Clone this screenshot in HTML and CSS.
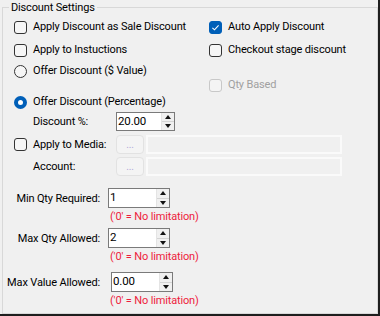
FILE: index.html
```html
<!DOCTYPE html>
<html>
<head>
<meta charset="utf-8">
<link rel="stylesheet" href="styles.css">
</head>
<body>
<div class="window">
  <div class="group">
    <div class="legend">Discount Settings</div>
    <div class="top">
      <div class="col left">
        <div class="opt"><span class="cb"></span><span>Apply Discount as Sale Discount</span></div>
        <div class="opt r2"><span class="cb"></span><span>Apply to Instuctions</span></div>
        <div class="opt r3"><span class="rb"></span><span>Offer Discount ($ Value)</span></div>
        <div class="opt r4"><span class="rb on"></span><span>Offer Discount (Percentage)</span></div>
      </div>
      <div class="col right">
        <div class="opt"><span class="cb on"><svg viewBox="0 0 13 13" width="13" height="13"><path d="M3.4 6.8 L5.5 8.8 L9.6 4.4" fill="none" stroke="#fff" stroke-width="1.1"/></svg></span><span>Auto Apply Discount</span></div>
        <div class="opt r2"><span class="cb"></span><span>Checkout stage discount</span></div>
        <div class="opt qty disabled"><span class="cb"></span><span>Qty Based</span></div>
      </div>
    </div>
    <div class="pct">
      <span class="lbl">Discount %:</span>
      <div class="spin s19"><span class="val">20.00</span><span class="btns"><span class="up"></span><span class="dn"></span></span></div>
    </div>
    <div class="media">
      <div class="opt mlabel"><span class="cb"></span><span>Apply to Media:</span></div>
      <span class="dots">...</span>
      <span class="tbox"></span>
    </div>
    <div class="media acc">
      <span class="alabel">Account:</span>
      <span class="dots">...</span>
      <span class="tbox"></span>
    </div>
    <div class="limits">
      <div class="lrow"><span class="llbl">Min Qty Required:</span><div class="spin"><span class="val">1</span><span class="btns"><span class="up"></span><span class="dn"></span></span></div></div>
      <div class="note">('0' = No limitation)</div>
      <div class="lrow second"><span class="llbl">Max Qty Allowed:</span><div class="spin"><span class="val">2</span><span class="btns"><span class="up"></span><span class="dn"></span></span></div></div>
      <div class="note">('0' = No limitation)</div>
      <div class="lrow third"><span class="llbl">Max Value Allowed:</span><div class="spin shift"><span class="val">0.00</span><span class="btns"><span class="up"></span><span class="dn"></span></span></div></div>
      <div class="note">('0' = No limitation)</div>
    </div>
  </div>
</div>
</body>
</html>
```
FILE: styles.css
```css
html, body { margin: 0; padding: 0; }
body {
  font-family: Roboto, "Liberation Sans", sans-serif;
  font-size: 11px;
  letter-spacing: -0.15px;
  color: #000;
  background: #f0f0f0;
  white-space: nowrap;
}
.window {
  width: 376px;
  height: 307px;
  border-right: 2px solid #1e1e1e;
  border-bottom: 2px solid #1e1e1e;
  background: #f0f0f0;
  padding: 7px 0 0 2px;
}
.group {
  position: relative;
  width: 374px;
  height: 305px;
  border: 1px solid #d8d8d8;
}
.legend {
  position: absolute;
  left: 6px;
  top: -7px;
  padding: 0 2px;
  background: #f0f0f0;
  line-height: 14px;
}
.top { display: flex; padding-top: 11px; }
.col { display: flex; flex-direction: column; }
.left { width: 195px; padding-left: 11px; }
.opt {
  display: flex;
  align-items: center;
  gap: 6px;
  height: 16px;
  line-height: 16px;
}
.r2 { margin-top: 7px; }
.r3 { margin-top: 5px; }
.r4 { margin-top: 15px; }
.qty { margin-top: 19px; }
.cb {
  width: 11px;
  height: 11px;
  border: 1px solid #333;
  border-radius: 3px;
  background: #f6f6f6;
  flex: none;
  position: relative;
}
.cb.on { background: #005fb8; border-color: #005fb8; }
.cb svg { position: absolute; left: -1px; top: -1px; }
.disabled { color: #a0a0a0; }
.disabled .cb { border-color: #c8c8c8; background: #f4f4f4; }
.rb {
  width: 11px;
  height: 11px;
  border: 1px solid #333;
  border-radius: 50%;
  background: #f6f6f6;
  flex: none;
}
.rb.on {
  background: #fff;
  border: 4px solid #005fb8;
  width: 5px;
  height: 5px;
}
.pct {
  display: flex;
  align-items: center;
  margin-top: 2px;
  padding-left: 30px;
}
.lbl { width: 83px; }
.spin {
  display: flex;
  width: 60px;
  height: 18px;
  border: 1px solid #7a7a7a;
  background: #fff;
  font-size: 11.5px;
}
.spin.s19 { height: 17px; width: 57px; }
.val { flex: 1; padding-left: 1px; line-height: 17px; }
.btns {
  width: 12px;
  display: flex;
  flex-direction: column;
  border-left: 1px solid #e4e4e4;
  background: #f0f0f0;
}
.btns span { flex: 1; position: relative; }
.btns .up { border-bottom: 1px solid #d4d4d4; }
.up::after, .dn::after {
  content: "";
  position: absolute;
  left: 3px;
  border-left: 3px solid transparent;
  border-right: 3px solid transparent;
}
.up::after { top: 2px; border-bottom: 4px solid #111; }
.dn::after { top: 2px; border-top: 4px solid #111; }
.media {
  display: flex;
  align-items: center;
  margin-top: 4px;
  padding-left: 11px;
  height: 19px;
}
.media.acc { margin-top: 3px; padding-left: 30px; }
.mlabel { width: 102px; }
.alabel { width: 83px; }
.dots {
  width: 26px;
  height: 17px;
  border: 1px solid #e2e2e2;
  border-radius: 4px;
  background: #f4f4f4;
  color: #b0a8d8;
  font-size: 10px;
  text-align: center;
  line-height: 18px;
  flex: none;
}
.tbox {
  margin-left: 2px;
  width: 192px;
  height: 15px;
  border: 2px solid #fafafa;
  flex: none;
}
.limits { margin-top: 12px; }
.lrow { display: flex; align-items: center; height: 20px; }
.lrow.second { margin-top: 4px; }
.lrow.third { margin-top: 8px; }
.llbl { width: 97px; text-align: right; padding-right: 8px; }
.spin.shift { margin-left: 3px; }
.note {
  color: #ee1c3c;
  line-height: 14px;
  margin-top: 2px;
  padding-left: 107px;
}
```
